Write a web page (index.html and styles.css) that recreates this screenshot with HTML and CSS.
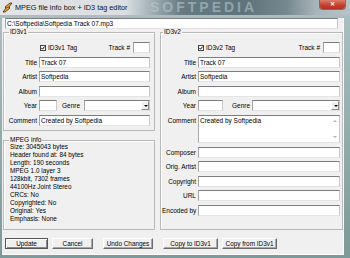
FILE: index.html
```html
<!DOCTYPE html>
<html lang="en">

<head>
    <meta charset="utf-8">
    <title>MPEG file info box + ID3 tag editor</title>
    <link rel="stylesheet" href="styles.css">
</head>

<body>
    <div class="window">
        <div class="titlebar">
            <svg class="app-icon" width="11" height="11" viewBox="0 0 11 11">
                <path d="M1 10 L4 6 L3 5 L8 1 L10 1 L7 5 L8 6 L3 10 Z" fill="#f2a431" stroke="#3a2a10" stroke-width="0.8" />
                <path d="M4 6 L7 5" stroke="#3a2a10" stroke-width="0.6" />
            </svg>
            <span class="caption">MPEG file info box + ID3 tag editor</span>
            <span class="watermark">SOFTPEDIA</span>
            <span class="close">✕</span>
        </div>

        <div class="frame">
            <div class="client">
                <div class="field path">C:\Softpedia\Softpedia Track 07.mp3</div>

                <div class="columns">
                    <div class="left-col">
                        <fieldset class="group tags v1">
                            <legend>ID3v1</legend>
                            <div class="tag-row">
                                <svg class="check" width="6" height="6" viewBox="0 0 6 6">
                                    <rect x="0.5" y="0.5" width="5" height="5" fill="#fff" stroke="#444" />
                                    <path d="M1.4 2.9 L2.5 4.2 L4.7 1.5" fill="none" stroke="#000" stroke-width="1" />
                                </svg>
                                <span class="check-label">ID3v1 Tag</span>
                                <span class="track-label">Track #</span>
                                <span class="field track"></span>
                            </div>
                            <span class="lbl">Title</span>
                            <div class="field">Track 07</div>
                            <span class="lbl">Artist</span>
                            <div class="field">Softpedia</div>
                            <span class="lbl">Album</span>
                            <div class="field"></div>
                            <span class="lbl">Year</span>
                            <div class="year-row">
                                <span class="field year"></span>
                                <span class="genre-label">Genre</span>
                                <span class="field combo"><span class="drop"></span></span>
                            </div>
                            <span class="lbl">Comment</span>
                            <div class="field">Created by Softpedia</div>
                        </fieldset>

                        <fieldset class="group info">
                            <legend>MPEG info</legend>
                            <p>Size: 3045043 bytes</p>
                            <p>Header found at: 84 bytes</p>
                            <p>Length: 190 seconds</p>
                            <p>MPEG 1.0 layer 3</p>
                            <p>128kbit, 7302 frames</p>
                            <p>44100Hz Joint Stereo</p>
                            <p>CRCs: No</p>
                            <p>Copyrighted: No</p>
                            <p>Original: Yes</p>
                            <p>Emphasis: None</p>
                        </fieldset>
                    </div>

                    <fieldset class="group tags v2">
                        <legend>ID3v2</legend>
                        <div class="tag-row">
                            <svg class="check" width="6" height="6" viewBox="0 0 6 6">
                                <rect x="0.5" y="0.5" width="5" height="5" fill="#fff" stroke="#444" />
                                <path d="M1.4 2.9 L2.5 4.2 L4.7 1.5" fill="none" stroke="#000" stroke-width="1" />
                            </svg>
                            <span class="check-label">ID3v2 Tag</span>
                            <span class="track-label">Track #</span>
                            <span class="field track"></span>
                        </div>
                        <span class="lbl">Title</span>
                        <div class="field">Track 07</div>
                        <span class="lbl">Artist</span>
                        <div class="field">Softpedia</div>
                        <span class="lbl">Album</span>
                        <div class="field"></div>
                        <span class="lbl">Year</span>
                        <div class="year-row">
                            <span class="field year"></span>
                            <span class="genre-label">Genre</span>
                            <span class="field combo"><span class="drop"></span></span>
                        </div>
                        <span class="lbl">Comment</span>
                        <div class="field memo">
                            <span class="memo-text">Created by Softpedia</span>
                            <span class="scroll"><i class="up"></i><i class="down"></i></span>
                        </div>
                        <span class="lbl">Composer</span>
                        <div class="field"></div>
                        <span class="lbl">Orig. Artist</span>
                        <div class="field"></div>
                        <span class="lbl">Copyright</span>
                        <div class="field"></div>
                        <span class="lbl">URL</span>
                        <div class="field"></div>
                        <span class="lbl">Encoded by</span>
                        <div class="field"></div>
                    </fieldset>
                </div>

                <div class="buttons">
                    <button class="btn default update">Update</button>
                    <button class="btn cancel">Cancel</button>
                    <button class="btn undo">Undo Changes</button>
                    <button class="btn copy-to">Copy to ID3v1</button>
                    <button class="btn copy-from">Copy from ID3v1</button>
                </div>
            </div>
        </div>
    </div>
</body>

</html>
```

FILE: styles.css
```css
* {
    margin: 0;
    padding: 0;
    box-sizing: border-box;
}

body {
    font-family: "Liberation Sans", Arial, sans-serif;
    font-size: 6.5px;
    color: #000;
    background: #7f9c9d;
}

.window {
    width: 350px;
    height: 258px;
    overflow: hidden;
    background: linear-gradient(#aebfc5, #7d9999);
}

/* title bar */

.titlebar {
    position: relative;
    height: 15px;
    display: flex;
    align-items: center;
    padding-left: 2px;
    overflow: hidden;
    background: linear-gradient(to right, #e3e5e7 0%, #dadee1 36%, #a4b1b7 43%, #667a82 52%, #5e737b 70%, #76888f 82%, #a7b4b9 90%, #b9c4c8 100%);
}

.app-icon {
    flex: none;
}

.caption {
    margin-left: 2px;
    font-size: 7.3px;
    color: #111;
    white-space: nowrap;
}

.watermark {
    position: absolute;
    left: 150px;
    top: 0;
    font-size: 14px;
    line-height: 14px;
    font-weight: bold;
    letter-spacing: 3px;
    color: rgba(190, 206, 214, 0.55);
}

.close {
    position: absolute;
    right: 5px;
    top: 0;
    width: 25px;
    height: 9px;
    border-radius: 0 0 3px 3px;
    background: linear-gradient(#dc7b68, #c0412d 60%, #b3301e);
    color: #fff;
    font-size: 6px;
    font-weight: bold;
    text-align: center;
    line-height: 8px;
    box-shadow: 0 0 0 1px rgba(80, 30, 20, 0.5);
}

/* client area */

.frame {
    padding: 0 6px 6px 2px;
}

.client {
    height: 237px;
    background: #f0f0f0;
    box-shadow: inset -1px -1px 0 #fbfbfb;
}

.field {
    display: block;
    height: 11px;
    background: #fff;
    border: 1px solid;
    border-color: #7d7d7d #c8c8c8 #e4e4e4 #a6a6a6;
    padding: 0 1px;
    line-height: 9px;
    white-space: nowrap;
    overflow: hidden;
}

.path {
    width: 333px;
    margin: 3px 0 0 3px;
}

.columns {
    display: flex;
    gap: 5px;
    margin-left: 1px;
}

/* group boxes */

.group {
    position: relative;
    min-width: 0;
    border: 1px solid #b9b9b9;
    box-shadow: inset 1px 1px 0 #fff;
}

.group legend {
    padding: 0 1px;
    font-size: 6.5px;
    line-height: 6px;
}

.tags {
    display: grid;
    grid-auto-rows: 11px;
    column-gap: 2px;
    row-gap: 3.62px;
    align-content: start;
    padding-top: 7px;
}

.v1 {
    width: 152px;
    height: 102px;
    grid-template-columns: 30px 111px;
    padding-left: 3px;
    padding-right: 4px;
}

.v1 legend {
    margin-left: 2px;
}

.v2 {
    width: 183px;
    height: 201px;
    grid-template-columns: 34px 142px;
    grid-template-rows: 11px 11px 11px 11px 11px 28px;
    padding-left: 1px;
    padding-right: 2px;
}

.v2 legend {
    margin-left: 1px;
}

.lbl {
    text-align: right;
    line-height: 11px;
    white-space: nowrap;
}

.tag-row {
    grid-column: 2;
    display: flex;
    align-items: center;
}

.v1 .check {
    margin-left: 1px;
}

.check-label {
    margin-left: 2px;
}

.track-label {
    margin-left: auto;
    margin-right: 3px;
}

.track {
    width: 17px;
}

.year-row {
    display: flex;
    align-items: center;
}

.v1 .year {
    width: 18px;
}

.v2 .year {
    width: 25px;
}

.genre-label {
    margin: 0 4px 0 5px;
}

.v2 .genre-label {
    margin: 0 2px 0 9px;
}

.combo {
    flex: 1;
    display: flex;
    justify-content: flex-end;
    padding: 0;
}

.drop {
    width: 8px;
    height: 9px;
    background: #f0f0f0;
    border: 1px solid;
    border-color: #fff #8a8a8a #8a8a8a #fff;
    position: relative;
}

.drop::after {
    content: "";
    position: absolute;
    left: 1.5px;
    top: 3px;
    border-left: 2px solid transparent;
    border-right: 2px solid transparent;
    border-top: 2px solid #000;
}

.memo {
    height: 28px;
    display: flex;
    padding-right: 0;
}

.memo-text {
    flex: 1;
}

.scroll {
    width: 9px;
    display: flex;
    flex-direction: column;
    justify-content: space-between;
    align-items: center;
    padding: 4px 0 4px;
}

.scroll i {
    width: 0;
    height: 0;
    border-left: 2px solid transparent;
    border-right: 2px solid transparent;
}

.scroll .up {
    border-bottom: 2px solid #b4b4b4;
}

.scroll .down {
    border-top: 2px solid #b4b4b4;
}

/* mpeg info */

.info {
    width: 152px;
    height: 93px;
    margin-top: 6px;
    padding-left: 6px;
}

.info legend {
    margin-left: -1px;
}

.info p {
    line-height: 8px;
    font-size: 6.4px;
    white-space: nowrap;
}

/* buttons */

.buttons {
    display: flex;
    margin: 8px 0 0 3px;
}

.btn {
    height: 11px;
    font-family: "Liberation Sans", Arial, sans-serif;
    font-size: 6.4px;
    color: #000;
    background: #f0f0f0;
    border: 1px solid;
    border-color: #fff #6b6b6b #6b6b6b #fff;
    box-shadow: inset -1px -1px 0 #a8a8a8;
    white-space: nowrap;
}

.default {
    border-color: #555;
    box-shadow: inset 1px 1px 0 #fff, inset -1px -1px 0 #8a8a8a;
}

.update {
    width: 43px;
}

.cancel {
    width: 41px;
    margin-left: 4px;
}

.undo {
    width: 50px;
    margin-left: 10px;
}

.copy-to {
    width: 55px;
    margin-left: 10px;
}

.copy-from {
    width: 55px;
    margin-left: 4px;
}
```
